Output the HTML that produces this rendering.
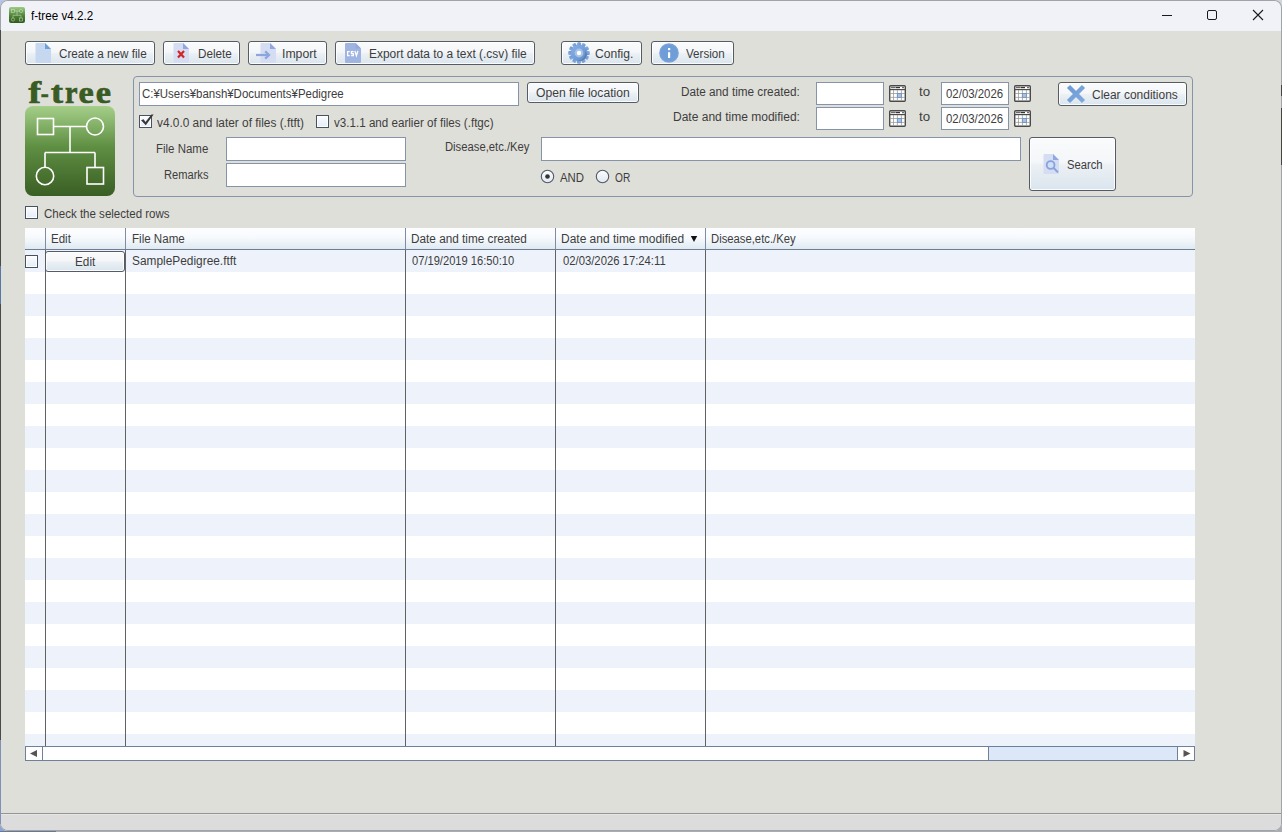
<!DOCTYPE html>
<html><head><meta charset="utf-8"><title>f-tree v4.2.2</title>
<style>html,body{margin:0;padding:0;width:1282px;height:832px;overflow:hidden;background:#a9acb2;}
#win{position:absolute;left:0;top:0;width:1282px;height:832px;overflow:hidden;}
.t{position:absolute;white-space:pre;font-family:"Liberation Sans",sans-serif;line-height:14px;transform-origin:0 0;}
.btn{position:absolute;border:1px solid #555c66;border-radius:3px;
  background:linear-gradient(#fafbfc 0%,#f4f6f9 47%,#ebf0f4 53%,#dae5ee 100%);
  box-shadow:inset 0 0 0 1px rgba(255,255,255,0.85);}
.fld{position:absolute;border:1px solid #8593ab;background:#fff;}
.cb{position:absolute;width:11px;height:11px;border:1px solid #485160;border-radius:0.5px;
  background:linear-gradient(#fbfcfe,#e4edf7);box-shadow:inset 0 0 0 1px #fdfeff;}
</style></head>
<body>
<div id="win">
<div style="position:absolute;left:0px;top:0px;width:12px;height:12px;background:#b4c4ea"></div><div style="position:absolute;left:0px;top:820px;width:12px;height:12px;background:#8aa4d8"></div><div style="position:absolute;left:1270px;top:0px;width:12px;height:12px;background:#d0d5de"></div><div style="position:absolute;left:0px;top:831px;width:56px;height:1px;background:#6a7896"></div><div style="position:absolute;left:0;top:0;width:1282px;height:831px;border-radius:8px;overflow:hidden;background:#dfdfd9;box-shadow:inset 0 0 0 1px #a0a3a8;"><div style="position:absolute;left:1px;top:1px;right:1px;height:30px;background:#f0f2f7;border-radius:7px 7px 0 0"></div><div style="position:absolute;left:1px;top:813px;right:1px;height:1px;background:#959595"></div><div style="position:absolute;left:1px;top:814px;right:1px;height:16px;background:#dcdcdc;border-top:1px solid #e6e6e6;box-sizing:border-box;border-radius:0 0 7px 7px"></div></div><svg style="position:absolute;left:9px;top:7px" width="16" height="16" viewBox="0 0 16 16"><defs><linearGradient id="gi" x1="0" y1="0" x2="0" y2="1"><stop offset="0" stop-color="#9dcb86"/><stop offset="0.55" stop-color="#4f8236"/><stop offset="1" stop-color="#2f5a1c"/></linearGradient></defs><rect x="0" y="0" width="16" height="16" rx="2" fill="url(#gi)"/><g stroke="#d8ecd0" stroke-width="0.55" stroke-opacity="0.85" fill="none"><rect x="2.5" y="2.5" width="3" height="3"/><circle cx="12" cy="4" r="1.6"/><path d="M5.5 4 H10.4 M8 4 V8.3 M4 8.3 H12 M4 8.3 V11 M12 8.3 V11"/><circle cx="4" cy="12.5" r="1.6"/><rect x="10.5" y="11" width="3" height="3"/></g></svg><div style="position:absolute;left:1162px;top:15px;width:10px;height:1px;background:#1a1a1a"></div><div style="position:absolute;left:1207px;top:10px;width:10px;height:10px;box-sizing:border-box;border:1px solid #1a1a1a;border-radius:2px"></div><svg style="position:absolute;left:1252px;top:9px" width="12" height="12" viewBox="0 0 12 12"><path d="M1 1 L11 11 M11 1 L1 11" stroke="#1a1a1a" stroke-width="1.1"/></svg><div class="btn" style="left:25px;top:41px;width:128px;height:22px;"></div><svg style="position:absolute;left:35px;top:43px" width="16" height="20" viewBox="0 0 16 20"><path d="M0.5 1 Q0.5 0 1.5 0 L10 0 L16 6 L16 19 Q16 20 15 20 L1.5 20 Q0.5 20 0.5 19 Z" fill="#c6d8ef"/><path d="M10 0 L16 6 L10 6 Z" fill="#6f9fd8"/></svg><div class="btn" style="left:163px;top:41px;width:75px;height:22px;"></div><svg style="position:absolute;left:173px;top:43px" width="16" height="20" viewBox="0 0 16 20"><path d="M0.5 1 Q0.5 0 1.5 0 L10 0 L16 6 L16 19 Q16 20 15 20 L1.5 20 Q0.5 20 0.5 19 Z" fill="#d4ddf2"/><path d="M10 0 L16 6 L10 6 Z" fill="#8fa9e0"/><path d="M5 8 L11 14.5 M11 8 L5 14.5" stroke="#d42424" stroke-width="2.2"/></svg><div class="btn" style="left:248px;top:41px;width:77px;height:22px;"></div><svg style="position:absolute;left:260px;top:43px" width="16" height="20" viewBox="0 0 16 20"><path d="M0.5 1 Q0.5 0 1.5 0 L10 0 L16 6 L16 19 Q16 20 15 20 L1.5 20 Q0.5 20 0.5 19 Z" fill="#d4ddf2"/><path d="M10 0 L16 6 L10 6 Z" fill="#8fa9e0"/></svg><svg style="position:absolute;left:255px;top:50px" width="16" height="10" viewBox="0 0 16 10"><path d="M1 5 H14" stroke="#8ca6dd" stroke-width="2.2"/><path d="M11 2.2 L14 5 L11 7.8" stroke="#8ca6dd" stroke-width="2.3" fill="none" stroke-linecap="square"/></svg><div class="btn" style="left:335px;top:41px;width:198px;height:22px;"></div><svg style="position:absolute;left:345px;top:43px" width="16" height="20" viewBox="0 0 16 20"><path d="M0 1 Q0 0 1 0 L10.5 0 L16 5.5 L16 19 Q16 20 15 20 L1 20 Q0 20 0 19 Z" fill="#a0b4e2"/><path d="M10.5 0 L16 5.5 L10.5 5.5 Z" fill="#92a9de"/><path d="M4.7 8.6 H2.6 V12.5 H4.7 M8.6 8.6 H6.4 V10.55 H8.3 V12.5 H6.1 M9.9 8 L11.4 12.7 L12.9 8" stroke="#fff" stroke-width="1.25" fill="none"/></svg><div class="btn" style="left:561px;top:41px;width:79px;height:22px;"></div><svg style="position:absolute;left:568px;top:42px" width="22" height="22" viewBox="0 0 22 22"><defs><linearGradient id="gg" x1="0" y1="0" x2="1" y2="1"><stop offset="0" stop-color="#8cb1e3"/><stop offset="0.5" stop-color="#74a0da"/><stop offset="1" stop-color="#6089c0"/></linearGradient></defs><g fill="url(#gg)"><rect x="9.1" y="0.2" width="3.8" height="5" rx="1" transform="rotate(0 11 11)"/><rect x="9.1" y="0.2" width="3.8" height="5" rx="1" transform="rotate(30 11 11)"/><rect x="9.1" y="0.2" width="3.8" height="5" rx="1" transform="rotate(60 11 11)"/><rect x="9.1" y="0.2" width="3.8" height="5" rx="1" transform="rotate(90 11 11)"/><rect x="9.1" y="0.2" width="3.8" height="5" rx="1" transform="rotate(120 11 11)"/><rect x="9.1" y="0.2" width="3.8" height="5" rx="1" transform="rotate(150 11 11)"/><rect x="9.1" y="0.2" width="3.8" height="5" rx="1" transform="rotate(180 11 11)"/><rect x="9.1" y="0.2" width="3.8" height="5" rx="1" transform="rotate(210 11 11)"/><rect x="9.1" y="0.2" width="3.8" height="5" rx="1" transform="rotate(240 11 11)"/><rect x="9.1" y="0.2" width="3.8" height="5" rx="1" transform="rotate(270 11 11)"/><rect x="9.1" y="0.2" width="3.8" height="5" rx="1" transform="rotate(300 11 11)"/><rect x="9.1" y="0.2" width="3.8" height="5" rx="1" transform="rotate(330 11 11)"/><circle cx="11" cy="11" r="8"/></g><path d="M17 9 A7 7 0 0 1 9 18 L12 19 A8 8 0 0 0 19 12 Z" fill="#5a7aa6" opacity="0.8"/><circle cx="11" cy="11" r="4.4" fill="#a5c3ea"/><circle cx="11" cy="11" r="2.2" fill="#fff"/></svg><div class="btn" style="left:651px;top:41px;width:81px;height:22px;"></div><svg style="position:absolute;left:659px;top:43px" width="20" height="20" viewBox="0 0 20 20"><circle cx="10" cy="10" r="9.8" fill="#7aa3d9"/><circle cx="10" cy="10" r="8.6" fill="#6f9dd8"/><rect x="9" y="5" width="2.2" height="2.2" fill="#fff"/><rect x="9" y="9.2" width="2.2" height="5.8" fill="#fff"/></svg><svg style="position:absolute;left:24px;top:76px" width="94" height="30" viewBox="0 0 94 30"><g font-family="Liberation Serif" font-weight="bold" fill="#3a5b24" stroke="#3a5b24" stroke-width="0.7"><text x="4.600000000000001" y="26.5" font-size="31" textLength="12.5" lengthAdjust="spacingAndGlyphs">f</text><text x="16.799999999999997" y="26.5" font-size="30" textLength="8" lengthAdjust="spacingAndGlyphs">-</text><text x="27" y="26.5" font-size="32" textLength="12" lengthAdjust="spacingAndGlyphs">t</text><text x="41" y="26.5" font-size="32" textLength="12.5" lengthAdjust="spacingAndGlyphs">r</text><text x="54.400000000000006" y="26.5" font-size="32" textLength="15.2" lengthAdjust="spacingAndGlyphs">e</text><text x="71.8" y="26.5" font-size="32" textLength="15.2" lengthAdjust="spacingAndGlyphs">e</text></g></svg><svg style="position:absolute;left:25px;top:106px" width="90" height="90" viewBox="0 0 90 90"><defs><linearGradient id="gl" x1="0" y1="0" x2="0" y2="1"><stop offset="0" stop-color="#a5cf89"/><stop offset="0.45" stop-color="#5f8f43"/><stop offset="1" stop-color="#3a5e24"/></linearGradient></defs><rect x="0" y="0" width="90" height="90" rx="8" fill="url(#gl)"/><g stroke="#fff" stroke-width="1.6" fill="none"><rect x="12.5" y="12.5" width="16" height="16"/><circle cx="70" cy="20.5" r="8.5"/><path d="M28.5 20.5 H61.5 M45 20.5 V46.5 M20 46.5 H70 M20 46.5 V61 M70 46.5 V61.5"/><circle cx="20" cy="70" r="8.7"/><rect x="62" y="61.5" width="16.5" height="16.5"/></g></svg><div style="position:absolute;left:133px;top:76px;width:1058px;height:119px;border:1px solid #8593ab;border-radius:4px"></div><div class="fld" style="left:139px;top:82px;width:378px;height:22px"></div><div class="btn" style="left:527px;top:82px;width:110px;height:19px;"></div><div class="cb" style="left:139px;top:115px"></div><svg style="position:absolute;left:139px;top:114px" width="15" height="15" viewBox="0 0 15 15"><path d="M2 6.2 L4.6 5.2 L6.5 8.0 L12.4 0.4 L14.6 0.6 L6.8 11.2 Z" fill="#383838"/></svg><div class="cb" style="left:316px;top:115px"></div><div class="fld" style="left:226px;top:137px;width:178px;height:22px"></div><div class="fld" style="left:226px;top:163px;width:178px;height:22px"></div><div class="fld" style="left:541px;top:137px;width:478px;height:22px"></div><svg style="position:absolute;left:540px;top:169px" width="15" height="15" viewBox="0 0 15 15"><defs><linearGradient id="gr" x1="0" y1="0" x2="0" y2="1"><stop offset="0" stop-color="#fcfdfe"/><stop offset="1" stop-color="#e2e9f1"/></linearGradient></defs><circle cx="7.5" cy="7.5" r="6.2" fill="url(#gr)" stroke="#4f5866" stroke-width="1.1"/><circle cx="7.5" cy="7.5" r="2.3" fill="#333"/></svg><svg style="position:absolute;left:595px;top:169px" width="15" height="15" viewBox="0 0 15 15"><circle cx="7.5" cy="7.5" r="6.2" fill="url(#gr)" stroke="#4f5866" stroke-width="1.1"/></svg><div class="fld" style="left:816px;top:82px;width:66px;height:21px"></div><svg style="position:absolute;left:889px;top:85px" width="17" height="17" viewBox="0 0 17 17"><rect x="0.7" y="0.7" width="15.6" height="15.6" rx="1" fill="#fff" stroke="#4a4a4a" stroke-width="1.4"/><line x1="0.7" y1="4.6" x2="16.3" y2="4.6" stroke="#4a4a4a" stroke-width="1.2"/><circle cx="3" cy="2.6" r="0.8" fill="#333"/><circle cx="5" cy="2.6" r="0.8" fill="#333"/><line x1="6.5" y1="2.6" x2="11" y2="2.6" stroke="#333" stroke-width="1.2"/><circle cx="14" cy="2.6" r="0.8" fill="#333"/><path d="M4.5 5 V16 M8.4 5 V16 M12.4 5 V16 M1 8.5 H16 M1 12.4 H16" stroke="#9a9a9a" stroke-width="0.8"/><rect x="8.4" y="8.5" width="4" height="3.9" fill="#a9c3e6" stroke="#6f93c0" stroke-width="0.9"/></svg><div class="fld" style="left:941px;top:82px;width:66px;height:21px"></div><svg style="position:absolute;left:1014px;top:85px" width="17" height="17" viewBox="0 0 17 17"><rect x="0.7" y="0.7" width="15.6" height="15.6" rx="1" fill="#fff" stroke="#4a4a4a" stroke-width="1.4"/><line x1="0.7" y1="4.6" x2="16.3" y2="4.6" stroke="#4a4a4a" stroke-width="1.2"/><circle cx="3" cy="2.6" r="0.8" fill="#333"/><circle cx="5" cy="2.6" r="0.8" fill="#333"/><line x1="6.5" y1="2.6" x2="11" y2="2.6" stroke="#333" stroke-width="1.2"/><circle cx="14" cy="2.6" r="0.8" fill="#333"/><path d="M4.5 5 V16 M8.4 5 V16 M12.4 5 V16 M1 8.5 H16 M1 12.4 H16" stroke="#9a9a9a" stroke-width="0.8"/><rect x="8.4" y="8.5" width="4" height="3.9" fill="#a9c3e6" stroke="#6f93c0" stroke-width="0.9"/></svg><div class="fld" style="left:816px;top:107px;width:66px;height:21px"></div><svg style="position:absolute;left:889px;top:110px" width="17" height="17" viewBox="0 0 17 17"><rect x="0.7" y="0.7" width="15.6" height="15.6" rx="1" fill="#fff" stroke="#4a4a4a" stroke-width="1.4"/><line x1="0.7" y1="4.6" x2="16.3" y2="4.6" stroke="#4a4a4a" stroke-width="1.2"/><circle cx="3" cy="2.6" r="0.8" fill="#333"/><circle cx="5" cy="2.6" r="0.8" fill="#333"/><line x1="6.5" y1="2.6" x2="11" y2="2.6" stroke="#333" stroke-width="1.2"/><circle cx="14" cy="2.6" r="0.8" fill="#333"/><path d="M4.5 5 V16 M8.4 5 V16 M12.4 5 V16 M1 8.5 H16 M1 12.4 H16" stroke="#9a9a9a" stroke-width="0.8"/><rect x="8.4" y="8.5" width="4" height="3.9" fill="#a9c3e6" stroke="#6f93c0" stroke-width="0.9"/></svg><div class="fld" style="left:941px;top:107px;width:66px;height:21px"></div><svg style="position:absolute;left:1014px;top:110px" width="17" height="17" viewBox="0 0 17 17"><rect x="0.7" y="0.7" width="15.6" height="15.6" rx="1" fill="#fff" stroke="#4a4a4a" stroke-width="1.4"/><line x1="0.7" y1="4.6" x2="16.3" y2="4.6" stroke="#4a4a4a" stroke-width="1.2"/><circle cx="3" cy="2.6" r="0.8" fill="#333"/><circle cx="5" cy="2.6" r="0.8" fill="#333"/><line x1="6.5" y1="2.6" x2="11" y2="2.6" stroke="#333" stroke-width="1.2"/><circle cx="14" cy="2.6" r="0.8" fill="#333"/><path d="M4.5 5 V16 M8.4 5 V16 M12.4 5 V16 M1 8.5 H16 M1 12.4 H16" stroke="#9a9a9a" stroke-width="0.8"/><rect x="8.4" y="8.5" width="4" height="3.9" fill="#a9c3e6" stroke="#6f93c0" stroke-width="0.9"/></svg><div class="btn" style="left:1058px;top:82px;width:127px;height:22px;"></div><svg style="position:absolute;left:1066px;top:84px" width="20" height="20" viewBox="0 0 20 20"><defs><linearGradient id="gx" x1="0" y1="0" x2="1" y2="1"><stop offset="0" stop-color="#6e9ad6"/><stop offset="1" stop-color="#7fa9de"/></linearGradient></defs><path d="M2.5 2.5 L17.5 17.5 M17.5 2.5 L2.5 17.5" stroke="url(#gx)" stroke-width="4.4"/></svg><div class="btn" style="left:1029px;top:137px;width:85px;height:52px;"></div><svg style="position:absolute;left:1043px;top:154px" width="16" height="20" viewBox="0 0 16 20"><path d="M0.5 1 Q0.5 0 1.5 0 L10 0 L16 6 L16 19 Q16 20 15 20 L1.5 20 Q0.5 20 0.5 19 Z" fill="#d4ddf2"/><path d="M10 0 L16 6 L10 6 Z" fill="#8fa9e0"/><circle cx="7.6" cy="11" r="3.9" stroke="#86a3de" stroke-width="1.8" fill="none"/><path d="M10.4 13.8 L15 18.4" stroke="#86a3de" stroke-width="2"/></svg><div class="cb" style="left:25px;top:206px"></div><div style="position:absolute;left:25px;top:228px;width:1170px;height:518px;overflow:hidden;background:#fff"><div style="position:absolute;left:0;top:22px;width:1170px;height:22px;background:#eef3fb"></div><div style="position:absolute;left:0;top:66px;width:1170px;height:22px;background:#eef3fb"></div><div style="position:absolute;left:0;top:110px;width:1170px;height:22px;background:#eef3fb"></div><div style="position:absolute;left:0;top:154px;width:1170px;height:22px;background:#eef3fb"></div><div style="position:absolute;left:0;top:198px;width:1170px;height:22px;background:#eef3fb"></div><div style="position:absolute;left:0;top:242px;width:1170px;height:22px;background:#eef3fb"></div><div style="position:absolute;left:0;top:286px;width:1170px;height:22px;background:#eef3fb"></div><div style="position:absolute;left:0;top:330px;width:1170px;height:22px;background:#eef3fb"></div><div style="position:absolute;left:0;top:374px;width:1170px;height:22px;background:#eef3fb"></div><div style="position:absolute;left:0;top:418px;width:1170px;height:22px;background:#eef3fb"></div><div style="position:absolute;left:0;top:462px;width:1170px;height:22px;background:#eef3fb"></div><div style="position:absolute;left:0;top:506px;width:1170px;height:22px;background:#eef3fb"></div><div style="position:absolute;left:0;top:0;width:1170px;height:21px;background:linear-gradient(#fdfdff 0%,#f8fbfe 40%,#ecf3f8 72%,#dee9f0 100%);border-bottom:1px solid #6e7c95"></div><div style="position:absolute;left:20px;top:0;width:1px;height:21px;background:#7f8ca3"></div><div style="position:absolute;left:20px;top:22px;width:1px;height:496px;background:#626262"></div><div style="position:absolute;left:100px;top:0;width:1px;height:21px;background:#7f8ca3"></div><div style="position:absolute;left:100px;top:22px;width:1px;height:496px;background:#626262"></div><div style="position:absolute;left:380px;top:0;width:1px;height:21px;background:#7f8ca3"></div><div style="position:absolute;left:380px;top:22px;width:1px;height:496px;background:#626262"></div><div style="position:absolute;left:530px;top:0;width:1px;height:21px;background:#7f8ca3"></div><div style="position:absolute;left:530px;top:22px;width:1px;height:496px;background:#626262"></div><div style="position:absolute;left:680px;top:0;width:1px;height:21px;background:#7f8ca3"></div><div style="position:absolute;left:680px;top:22px;width:1px;height:496px;background:#626262"></div></div><svg style="position:absolute;left:690px;top:235px" width="8" height="8" viewBox="0 0 8 8"><path d="M0.8 1 H7.2 L4 7 Z" fill="#111"/></svg><div class="cb" style="left:25px;top:255px"></div><div class="btn" style="left:45px;top:251px;width:78px;height:19px;"></div><div style="position:absolute;left:25px;top:746px;width:1168px;height:13px;border:1px solid #6f7f9c;background:#fff"></div><div style="position:absolute;left:42px;top:746px;width:1px;height:15px;background:#6f7f9c"></div><div style="position:absolute;left:988px;top:746px;width:188px;height:13px;border:1px solid #6f7f9c;background:#dce7f8"></div><div style="position:absolute;left:1177px;top:746px;width:1px;height:15px;background:#6f7f9c"></div><svg style="position:absolute;left:29px;top:749px" width="10" height="9" viewBox="0 0 10 9"><path d="M1 4.5 L8 1 V8 Z" fill="#555"/></svg><svg style="position:absolute;left:1182px;top:749px" width="10" height="9" viewBox="0 0 10 9"><path d="M8.5 4.5 L1.5 1 V8 Z" fill="#555"/></svg><div style="position:absolute;left:0px;top:30px;width:1px;height:236px;background:#4a4a4a"></div><div style="position:absolute;left:0px;top:266px;width:1px;height:38px;background:#5a78a6"></div><div style="position:absolute;left:0px;top:304px;width:1px;height:436px;background:#4a4a4a"></div><div style="position:absolute;left:0px;top:740px;width:1px;height:84px;background:#8090b8"></div><div style="position:absolute;left:1281px;top:85px;width:1px;height:11px;background:#444"></div><div style="position:absolute;left:1281px;top:108px;width:1px;height:57px;background:#444"></div>
<span class="t" style="left:31.0px;top:9px;font-size:12.5px;color:#000;transform:scaleX(0.9319);">f-tree v4.2.2</span><span class="t" style="left:59.2px;top:47px;font-size:12px;color:#3d3d3d;transform:scaleX(0.9742);">Create a new file</span><span class="t" style="left:198.2px;top:47px;font-size:12px;color:#3d3d3d;transform:scaleX(0.9749);">Delete</span><span class="t" style="left:282.48px;top:47px;font-size:12px;color:#3d3d3d;transform:scaleX(1.0216);">Import</span><span class="t" style="left:369.2px;top:47px;font-size:12px;color:#3d3d3d;transform:scaleX(0.9935);">Export data to a text (.csv) file</span><span class="t" style="left:595.2px;top:47px;font-size:12px;color:#3d3d3d;transform:scaleX(1.0105);">Config.</span><span class="t" style="left:686.0px;top:47px;font-size:12px;color:#3d3d3d;transform:scaleX(0.9657);">Version</span><span class="t" style="left:142.2px;top:87px;font-size:12px;color:#3d3d3d;transform:scaleX(0.9539);">C:¥Users¥bansh¥Documents¥Pedigree</span><span class="t" style="left:536.0px;top:86px;font-size:12px;color:#3d3d3d;transform:scaleX(1.0103);">Open file location</span><span class="t" style="left:157.0px;top:116px;font-size:12px;color:#3d3d3d;transform:scaleX(0.9884);">v4.0.0 and later of files (.ftft)</span><span class="t" style="left:334.0px;top:116px;font-size:12px;color:#3d3d3d;transform:scaleX(0.9682);">v3.1.1 and earlier of files (.ftgc)</span><span class="t" style="left:156.3px;top:142px;font-size:12px;color:#3d3d3d;transform:scaleX(0.9569);">File Name</span><span class="t" style="left:164.48px;top:168px;font-size:12px;color:#3d3d3d;transform:scaleX(0.9256);">Remarks</span><span class="t" style="left:445.2px;top:140px;font-size:12px;color:#3d3d3d;transform:scaleX(0.9374);">Disease,etc./Key</span><span class="t" style="left:559.6px;top:171px;font-size:12px;color:#3d3d3d;transform:scaleX(0.9505);">AND</span><span class="t" style="left:614.5px;top:171px;font-size:12px;color:#3d3d3d;transform:scaleX(0.8454);">OR</span><span class="t" style="left:681.2px;top:85px;font-size:12px;color:#3d3d3d;transform:scaleX(0.9782);">Date and time created:</span><span class="t" style="left:673.2px;top:110px;font-size:12px;color:#3d3d3d;transform:scaleX(1.0018);">Date and time modified:</span><span class="t" style="left:919.0px;top:85px;font-size:12px;color:#3d3d3d;transform:scaleX(1.1079);">to</span><span class="t" style="left:919.0px;top:110px;font-size:12px;color:#3d3d3d;transform:scaleX(1.1079);">to</span><span class="t" style="left:945.5px;top:87px;font-size:12px;color:#3d3d3d;transform:scaleX(0.9522);">02/03/2026</span><span class="t" style="left:945.5px;top:112px;font-size:12px;color:#3d3d3d;transform:scaleX(0.9522);">02/03/2026</span><span class="t" style="left:1092.2px;top:88px;font-size:12px;color:#3d3d3d;transform:scaleX(0.9975);">Clear conditions</span><span class="t" style="left:1067.2px;top:158px;font-size:12px;color:#3d3d3d;transform:scaleX(0.9355);">Search</span><span class="t" style="left:43.5px;top:207px;font-size:12px;color:#3d3d3d;transform:scaleX(0.9608);">Check the selected rows</span><span class="t" style="left:51.3px;top:232px;font-size:12px;color:#3d3d3d;transform:scaleX(0.9596);">Edit</span><span class="t" style="left:131.8px;top:232px;font-size:12px;color:#3d3d3d;transform:scaleX(0.9644);">File Name</span><span class="t" style="left:411.3px;top:232px;font-size:12px;color:#3d3d3d;transform:scaleX(0.9806);">Date and time created</span><span class="t" style="left:561.3px;top:232px;font-size:12px;color:#3d3d3d;transform:scaleX(0.9974);">Date and time modified</span><span class="t" style="left:711.3px;top:232px;font-size:12px;color:#3d3d3d;transform:scaleX(0.9396);">Disease,etc./Key</span><span class="t" style="left:74.8px;top:255px;font-size:12px;color:#3d3d3d;transform:scaleX(0.9796);">Edit</span><span class="t" style="left:131.8px;top:254px;font-size:12px;color:#3d3d3d;transform:scaleX(0.9904);">SamplePedigree.ftft</span><span class="t" style="left:412.3px;top:254px;font-size:12px;color:#3d3d3d;transform:scaleX(0.9282);">07/19/2019 16:50:10</span><span class="t" style="left:562.5px;top:254px;font-size:12px;color:#3d3d3d;transform:scaleX(0.9404);">02/03/2026 17:24:11</span>
</div>
</body></html>
